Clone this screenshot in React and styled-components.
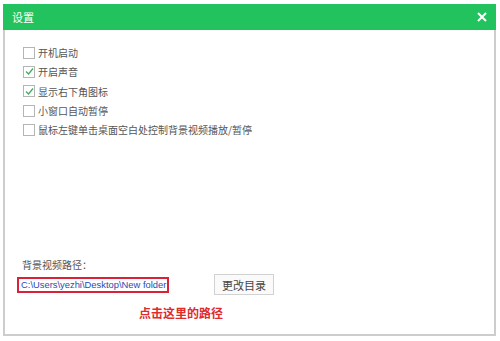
import React from "react";
import styled, { createGlobalStyle } from "styled-components";

const Global = createGlobalStyle`
  html, body { margin: 0; padding: 0; background: #fff; }
  body { font-family: "Noto Sans CJK SC", "Noto Sans", sans-serif; }
`;

const Window = styled.div`
  margin: 4px 4px 0 3px;
  width: 493px;
  height: 332px;
  display: flex;
  flex-direction: column;
  box-sizing: border-box;
`;

const TitleBar = styled.div`
  height: 26px;
  background: #22c35e;
  display: flex;
  align-items: center;
  justify-content: space-between;
  padding: 0 8px 0 9px;
  color: #fff;
  font-size: 11px;
  flex-shrink: 0;
`;

const Close = styled.span`
  width: 12px;
  height: 12px;
  display: flex;
`;

const Body = styled.div`
  flex: 1;
  border: 2px solid #cdcdcd;
  border-top: none;
  display: flex;
  flex-direction: column;
  padding: 13px 0 0 16px;
`;

const OptionList = styled.div`
  display: flex;
  flex-direction: column;
`;

const Option = styled.label`
  height: 19.3px;
  display: flex;
  align-items: center;
  gap: 3px;
  font-size: 10px;
  color: #555;
  padding-left: 2px;
`;

const Box = styled.span`
  width: 10px;
  height: 10px;
  border: 1px solid #b5b5b5;
  background: #fff;
  display: flex;
  align-items: center;
  justify-content: center;
`;

const Spacer = styled.div`
  flex: 1;
`;

const PathLabel = styled.div`
  font-size: 10px;
  color: #555;
  height: 16px;
  line-height: 16px;
  margin-bottom: 1px;
  padding-left: 1px;
`;

const PathRow = styled.div`
  display: flex;
  align-items: center;
  margin-left: -4px;
`;

const PathBox = styled.div`
  width: 146px;
  height: 12px;
  border: 2px solid #d9213a;
  display: flex;
  align-items: center;
  padding-left: 2px;
  font-family: "Liberation Sans", "DejaVu Sans", sans-serif;
  font-size: 9.4px;
  color: #2a4ab0;
  white-space: nowrap;
  overflow: hidden;
`;

const Button = styled.div`
  margin-left: 45px;
  width: 58px;
  height: 19px;
  border: 1px solid #d2d2d2;
  background: #fafafa;
  display: flex;
  align-items: center;
  justify-content: center;
  font-size: 11px;
  color: #444;
`;

const Hint = styled.div`
  margin: 9px 0 0 118px;
  color: #e02b2b;
  font-size: 12px;
  font-weight: bold;
  height: 18px;
  line-height: 18px;
  margin-bottom: 12px;
`;

const Check = () => (
  <svg width="9" height="9" viewBox="0 0 9 9">
    <path d="M1 4.5 L3.5 7 L8 1.5" fill="none" stroke="#3fae5e" strokeWidth="1.3" />
  </svg>
);

const options = [
  { text: "开机启动", checked: false },
  { text: "开启声音", checked: true },
  { text: "显示右下角图标", checked: true },
  { text: "小窗口自动暂停", checked: false },
  { text: "鼠标左键单击桌面空白处控制背景视频播放/暂停", checked: false },
];

export default function App() {
  return (
    <>
      <Global />
      <Window>
        <TitleBar>
          <span>设置</span>
          <Close>
            <svg width="12" height="12" viewBox="0 0 12 12">
              <path d="M2 2 L10 10 M10 2 L2 10" stroke="#fff" strokeWidth="2" />
            </svg>
          </Close>
        </TitleBar>
        <Body>
          <OptionList>
            {options.map((o) => (
              <Option key={o.text}>
                <Box>{o.checked && <Check />}</Box>
                {o.text}
              </Option>
            ))}
          </OptionList>
          <Spacer />
          <PathLabel>背景视频路径：</PathLabel>
          <PathRow>
            <PathBox>C:\Users\yezhi\Desktop\New folder</PathBox>
            <Button>更改目录</Button>
          </PathRow>
          <Hint>点击这里的路径</Hint>
        </Body>
      </Window>
    </>
  );
}
